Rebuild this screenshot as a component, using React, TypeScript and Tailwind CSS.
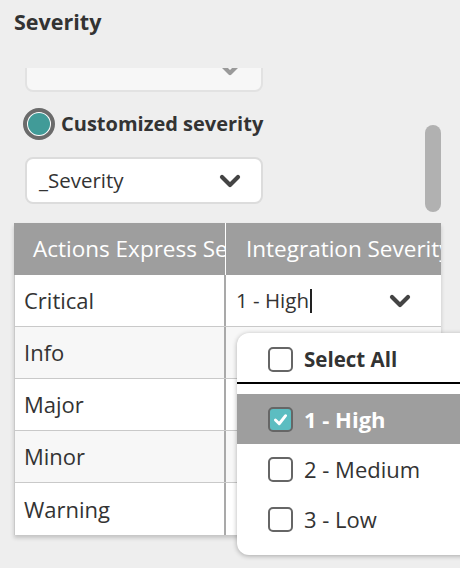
import React from 'react';

const FONT = { fontFamily: '"Open Sans", "Liberation Sans", sans-serif' };

const Chevron = ({ className = '' }: { className?: string }) => (
  <svg viewBox="0 0 22 14" className={className} fill="none">
    <polyline points="3,3 11,11 19,3" stroke="currentColor" strokeWidth="4.2" strokeLinecap="round" strokeLinejoin="round" />
  </svg>
);

const Checkbox = ({ checked }: { checked?: boolean }) => (
  <span
    className={`flex h-[25px] w-[25px] shrink-0 items-center justify-center rounded-[5px] border-2 border-[#666666] ${
      checked ? 'bg-[#5cbdc1]' : 'bg-white'
    }`}
  >
    {checked && (
      <svg viewBox="0 0 20 20" className="h-[17px] w-[17px]" fill="none">
        <polyline points="4,10.5 8.5,15 16,5.5" stroke="white" strokeWidth="3.4" strokeLinecap="round" strokeLinejoin="round" />
      </svg>
    )}
  </span>
);

const rows = ['Critical', 'Info', 'Major', 'Minor', 'Warning'];

export default function App() {
  return (
    <div className="relative h-[568px] w-[460px] overflow-hidden bg-[#eeeeee] text-[#333333]" style={FONT}>
      <h2 className="px-[14px] pt-[6px] text-[21.5px] font-bold leading-[32px] text-[#333333]">Severity</h2>

      {/* scrolling options area */}
      <div className="relative mt-[30px] h-[500px] overflow-hidden">
        <div className="-mt-[23px] flex flex-col">
          <div className="ml-[25px] flex h-[47px] w-[238px] items-center justify-end rounded-[8px] border-2 border-[#e2e2e2] bg-[#f7f7f7] pr-[20px]">
            <Chevron className="h-[14px] w-[22px] text-[#9a9a9a]" />
          </div>

          <label className="ml-[23px] mt-[16px] flex items-center gap-[6px]">
            <span className="flex h-[32px] w-[32px] items-center justify-center rounded-full border-[4px] border-[#6b6b6b] bg-white">
              <span className="h-[22px] w-[22px] rounded-full bg-[#419b98]" />
            </span>
            <span className="text-[20px] font-bold leading-[28px] text-[#333333]">Customized severity</span>
          </label>

          <div className="ml-[25px] mt-[17px] flex h-[47px] w-[238px] items-center justify-between rounded-[8px] border-2 border-[#dcdcdc] bg-white pl-[12px] pr-[20px]">
            <span className="text-[20.5px]">_Severity</span>
            <Chevron className="h-[14px] w-[22px] text-[#444444]" />
          </div>

          {/* mapping table */}
          <div className="ml-[14px] mt-[19px] w-[427px] shadow-[0_3px_4px_rgba(0,0,0,0.18)]">
            <div className="flex h-[52px] bg-[#9e9e9e] text-[22.5px] text-white">
              <div className="flex w-[212px] items-center overflow-hidden whitespace-nowrap border-r border-white pl-[19px]">
                <span>Actions Express Severity</span>
              </div>
              <div className="flex min-w-0 flex-1 items-center overflow-hidden whitespace-nowrap pl-[20px]">
                <span>Integration Severity</span>
              </div>
            </div>
            {rows.map((r, i) => (
              <div
                key={r}
                className={`flex h-[52px] border-b border-l border-[#c9c9c9] text-[22px] ${
                  i % 2 === 1 ? 'bg-[#f7f7f7]' : 'bg-white'
                } ${i === rows.length - 1 ? 'border-b-0' : ''}`}
              >
                <div className="flex w-[211px] items-center border-r-2 border-[#a9a9a9] pl-[9px]">{r}</div>
                <div className="flex flex-1 items-center justify-between pl-[10px] pr-[30px]">
                  {i === 0 && (
                    <>
                      <span className="flex items-center text-[20.5px]">
                        1 - High<span className="ml-[1px] h-[24px] w-[2px] bg-[#222222]" />
                      </span>
                      <Chevron className="h-[14px] w-[22px] text-[#444444]" />
                    </>
                  )}
                </div>
              </div>
            ))}
          </div>
        </div>

        {/* overlay scrollbar */}
        <div className="absolute right-[19px] top-[57px] h-[87px] w-[16px] rounded-full bg-[#b1b1b1]" />
      </div>

      {/* open multi-select dropdown */}
      <div className="absolute left-[237px] top-[333px] w-[240px] overflow-hidden rounded-[12px] bg-white shadow-[0_1px_5px_rgba(0,0,0,0.3)]">
        <div className="flex h-[51px] items-center gap-[11px] border-b-2 border-black pl-[31px] pt-[4px]">
          <Checkbox />
          <span className="text-[20.5px] font-bold">Select All</span>
        </div>
        <div className="mt-[10px] flex h-[50px] items-center gap-[11px] bg-[#9e9e9e] pl-[31px]">
          <Checkbox checked />
          <span className="text-[22px] font-bold text-white">1 - High</span>
        </div>
        <div className="flex h-[50px] items-center gap-[11px] pl-[31px]">
          <Checkbox />
          <span className="text-[22px]">2 - Medium</span>
        </div>
        <div className="flex h-[50px] items-center gap-[11px] pl-[31px]">
          <Checkbox />
          <span className="text-[22px]">3 - Low</span>
        </div>
        <div className="h-[11px]" />
      </div>
    </div>
  );
}
